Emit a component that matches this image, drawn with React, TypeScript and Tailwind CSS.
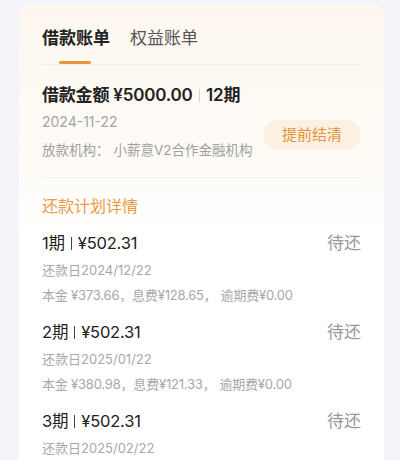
import React from "react";

const items = [
  { n: 1, date: "2024/12/22", p: "373.66", f: "128.65" },
  { n: 2, date: "2025/01/22", p: "380.98", f: "121.33" },
  { n: 3, date: "2025/02/22", p: "387.98", f: "114.33" },
];

export default function App() {
  return (
    <div
      className="w-[400px] h-[460px] overflow-hidden bg-[#f4f5fa] pt-[4px] px-[17px]"
      style={{ fontFamily: 'Inter, "Noto Sans CJK SC", "Noto Sans", sans-serif' }}
    >
      <div className="w-[365px] ml-[2px] rounded-[11px] bg-gradient-to-b from-[#fdf7ef] via-[#fefbf7] via-30% to-white to-45% px-[23px] h-[520px]">
        <div className="pt-[22px] flex items-end gap-[20px] leading-[24px]">
          <span className="text-[17px] font-bold text-[#222]">借款账单</span>
          <span className="text-[17px] text-[#555]">权益账单</span>
        </div>
        <div className="mt-[11px] ml-[17px] w-[32px] h-[3px] rounded-full bg-[#e8943a]" />
        <div className="h-px bg-[#f3ede6]" />

        <div className="mt-[17px] text-[17px] font-semibold text-[#222] leading-[26px] flex items-center tracking-[-0.2px]">
          <span>借款金额 ¥5000.00</span>
          <span className="mx-[6px] w-[1.5px] h-[13px] bg-[#cfcfcf]" />
          <span>12期</span>
        </div>
        <div className="flex items-center justify-between">
          <div>
            <div className="mt-[4px] text-[14px] leading-[20px] text-[#a5a5a5]">2024-11-22</div>
            <div className="mt-[8px] text-[13.5px] leading-[20px] text-[#a0a0a0]">
              放款机构：<span className="ml-[4px]">小薪意V2合作金融机构</span>
            </div>
          </div>
          <div className="mt-[2px] w-[98px] h-[30px] rounded-full bg-[#fdf0e1] flex items-center justify-center text-[15px] text-[#e3923c]">
            提前结清
          </div>
        </div>
        <div className="mt-[17px] h-px bg-[#f1eee9]" />

        <div className="mt-[17px] text-[16px] leading-[22px] text-[#eb9a46]">还款计划详情</div>

        <div className="mt-[14px] flex flex-col gap-[16px]">
          {items.map((it) => (
            <div key={it.n}>
              <div className="flex items-center justify-between leading-[24px]">
                <span className="text-[16.5px] text-[#222] flex items-center tracking-[-0.2px]">
                  {it.n}期<span className="mx-[6px] w-px h-[13px] bg-[#444]" />¥502.31
                </span>
                <span className="text-[17px] text-[#999]">待还</span>
              </div>
              <div className="mt-[6px] text-[13px] leading-[18px] text-[#a8a8a8]">还款日{it.date}</div>
              <div className="mt-[7px] text-[13px] leading-[18px] text-[#a8a8a8] tracking-[-0.2px]">
                本金 ¥{it.p}，息费¥{it.f}，<span className="ml-[4px]">逾期费¥0.00</span>
              </div>
            </div>
          ))}
        </div>
      </div>
    </div>
  );
}
